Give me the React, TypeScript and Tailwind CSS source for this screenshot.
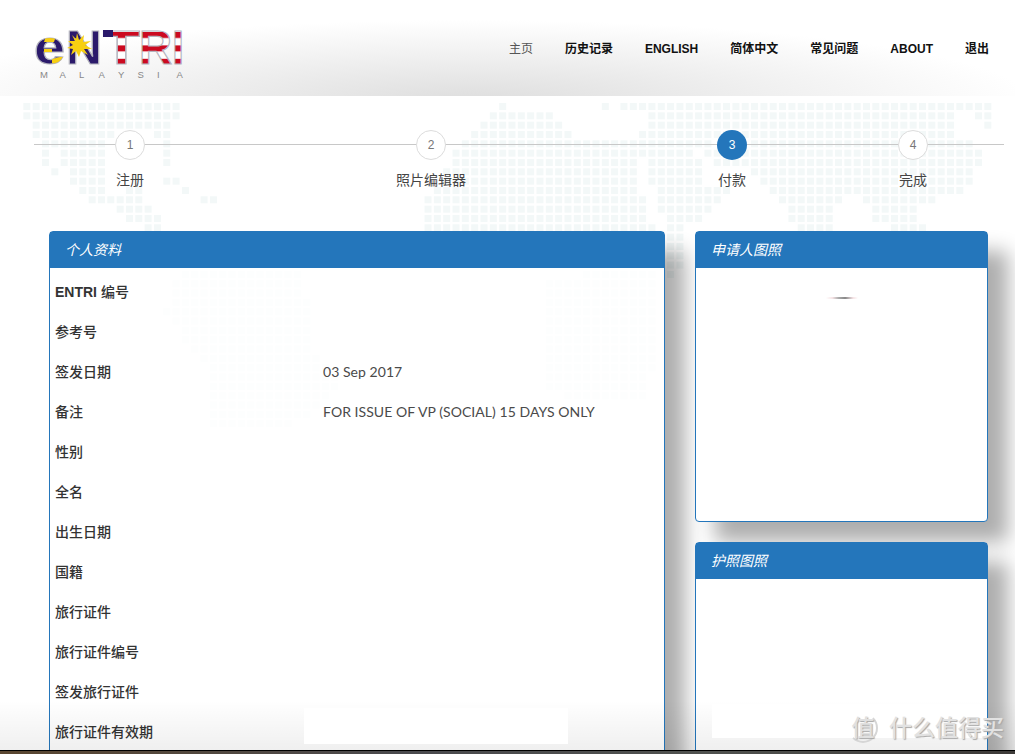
import React from "react";

const SANS = "font-['Liberation_Sans','Noto_Sans_CJK_SC',sans-serif]";

type Span = [number, number];
const mapRows: Span[][] = [
  [[0,16],[51,51],[62,62],[64,99],[100,103]],
  [[0,16],[50,56],[67,99],[102,103]],
  [[1,15],[49,57],[67,99],[103,103]],
  [[1,9],[14,15],[48,58],[66,99]],
  [[2,8],[15,15],[47,73],[78,101]],
  [[2,2],[4,8],[15,15],[46,71],[73,102]],
  [[2,2],[4,8],[15,15],[46,65],[67,72],[74,102]],
  [[3,3],[5,8],[45,65],[67,72],[78,101]],
  [[5,8],[15,16],[45,65],[67,72],[79,101]],
  [[6,8],[11,12],[17,17],[44,65],[68,75],[80,100]],
  [[7,12],[19,20],[43,66],[68,74],[81,87],[90,97]],
  [[10,13],[43,66],[68,73],[82,86],[91,95]],
  [[11,14],[43,66],[69,72],[82,86],[91,95]],
  [[13,14],[43,67],[69,70],[83,86],[93,96]],
  [[69,70]],
  [[69,70]],
  [[69,70]],
  [[69,70]],
  [[17,29],[60,67],[69,69]],
  [[16,29],[56,67]],
  [[16,29],[56,67]],
  [[16,30],[56,67]],
  [[15,30],[56,67]],
  [[16,30],[56,67]],
  [[17,30],[56,67]],
  [[17,30],[56,67]],
  [[18,30],[56,67]],
  [[19,31],[56,67]],
  [[20,32],[56,67]],
  [[20,33],[56,66]],
  [[20,33],[56,66]],
  [[20,32],[58,66]],
  [[20,31]],
  [[20,30]],
  [[20,28]],
];

function WorldMap() {
  const cells: React.ReactElement[] = [];
  mapRows.forEach((spans, r) =>
    spans.forEach(([a, b]) => {
      for (let c = a; c <= b; c++) {
        cells.push(
          <rect key={`${r}-${c}`} x={23.33 + 9.33 * c} y={103 + 9.33 * r} width={7} height={7} fill="#f3f8f8" />
        );
      }
    })
  );
  return (
    <svg className="absolute left-0 top-0" width={1015} height={754}>
      {cells}
    </svg>
  );
}

function Logo() {
  const s = { fontFamily: "'Liberation Sans', sans-serif", fontWeight: 700 } as const;
  const letters = "MALAYSIA".split("");
  return (
    <svg width={170} height={60} viewBox="30 25 170 60" className="mt-[25px] shrink-0">
      <defs>
        <pattern id="flag" patternUnits="userSpaceOnUse" x="0" y="32" width="200" height="13.4">
          <rect width="200" height="13.4" fill="#ffffff" />
          <rect width="200" height="6" fill="#cc0a20" />
        </pattern>
        <clipPath id="eclip">
          <text x="34" y="64" fontSize="49" textLength="31" lengthAdjust="spacingAndGlyphs" style={s}>e</text>
        </clipPath>
      </defs>
      <text x="34" y="64" fontSize="49" textLength="31" lengthAdjust="spacingAndGlyphs" fill="#2b1a6b" stroke="#b4b4be" strokeWidth="1.2" style={s}>e</text>
      <g clipPath="url(#eclip)">
        <polygon points="46,36 56,36 54,42 44,42" fill="#f7cf12" />
        <polygon points="44,49 52,49 52,53 44,53" fill="#f7cf12" />
        <polygon points="52,59 64,56 62,66 52,63" fill="#f7cf12" />
      </g>
      <text x="66" y="64" fontSize="48" textLength="36" lengthAdjust="spacingAndGlyphs" fill="#2b1a6b" stroke="#b4b4be" strokeWidth="1.2" style={s}>N</text>
      <polygon
        points="77,33 79,40 84,35 83,42 91,41 85,45 92,49 84,49 88,55 81,51 79,57 76,51 71,55 73,49 67,48 73,45 68,41 75,41 72,35 76,39"
        fill="#f7cf12"
      />
      <text x="103" y="64" fontSize="48" textLength="37" lengthAdjust="spacingAndGlyphs" fill="url(#flag)" stroke="#b4b4be" strokeWidth="1.2" style={s}>T</text>
      <rect x="103" y="30" width="10" height="7" fill="#2b1a6b" />
      <text x="139" y="64" fontSize="48" textLength="33" lengthAdjust="spacingAndGlyphs" fill="url(#flag)" stroke="#b4b4be" strokeWidth="1.2" style={s}>R</text>
      <text x="172" y="64" fontSize="48" textLength="12" lengthAdjust="spacingAndGlyphs" fill="url(#flag)" stroke="#b4b4be" strokeWidth="1.2" style={s}>I</text>
      {letters.map((ch, i) => (
        <text key={i} x={40 + i * 19.5} y={78} fontSize="9.5" fill="#888" style={{ fontFamily: "'Liberation Sans', sans-serif" }}>
          {ch}
        </text>
      ))}
    </svg>
  );
}

const nav = ["主页", "历史记录", "ENGLISH", "简体中文", "常见问题", "ABOUT", "退出"];

function Header() {
  return (
    <header className="relative flex h-24 items-start justify-between pl-[30px] pr-[26px] bg-[radial-gradient(ellipse_560px_80px_at_470px_100px,#dedede,#ffffff)]">
      <Logo />
      <nav className="mt-[39px] flex items-center gap-8">
        {nav.map((n, i) => (
          <a key={n} className={`text-xs leading-5 whitespace-nowrap ${i === 0 ? "font-normal text-[#555]" : "font-bold text-[#111]"}`}>
            {n}
          </a>
        ))}
      </nav>
    </header>
  );
}

const steps = [
  { n: "1", t: "注册" },
  { n: "2", t: "照片编辑器" },
  { n: "3", t: "付款", active: true },
  { n: "4", t: "完成" },
];

function Stepper() {
  return (
    <div className="relative h-[135px] pt-[34px] pl-[100px]">
      <div className="absolute left-[34px] top-[48px] h-px w-[970px] bg-[#c8c8c8]" />
      <div className="relative flex">
        <div className="flex w-[60px] flex-col items-center">
          <StepBody {...steps[0]} />
        </div>
        <div className="ml-[241px] flex w-[60px] flex-col items-center">
          <StepBody {...steps[1]} />
        </div>
        <div className="ml-[241px] flex w-[60px] flex-col items-center">
          <StepBody {...steps[2]} />
        </div>
        <div className="ml-[121px] flex w-[60px] flex-col items-center">
          <StepBody {...steps[3]} />
        </div>
      </div>
    </div>
  );
}

function StepBody({ n, t, active }: { n: string; t: string; active?: boolean }) {
  return (
    <>
      <div
        className={`flex h-[30px] w-[30px] items-center justify-center rounded-full text-xs ${
          active ? "bg-[#2476bb] text-white" : "border border-[#dcdcdc] bg-white text-[#777]"
        }`}
      >
        {n}
      </div>
      <div className="mt-[10px] whitespace-nowrap text-sm leading-5 text-[#444]">{t}</div>
    </>
  );
}

const rows: [string, string?][] = [
  ["ENTRI 编号"],
  ["参考号"],
  ["签发日期", "03 Sep 2017"],
  ["备注", "FOR ISSUE OF VP (SOCIAL) 15 DAYS ONLY"],
  ["性别"],
  ["全名"],
  ["出生日期"],
  ["国籍"],
  ["旅行证件"],
  ["旅行证件编号"],
  ["签发旅行证件"],
  ["旅行证件有效期"],
];

function PanelHead({ title }: { title: string }) {
  return (
    <div className="flex h-[36px] items-center bg-[#2476bb] pl-[15px] text-sm italic text-white">{title}</div>
  );
}

export default function App() {
  return (
    <div className={`relative h-[754px] w-[1015px] overflow-hidden bg-white ${SANS}`}>
      <WorldMap />
      <div className="relative">
        <Header />
        <Stepper />
        <main className="flex items-start gap-[30px] pl-[49px]">
          <section className="w-[616px] rounded-t border border-[#2476bb] bg-white/80 shadow-[20px_20px_20px_rgba(0,0,0,0.32)]">
            <PanelHead title="个人资料" />
            <div className="pt-1 pb-10">
              {rows.map(([k, v]) => (
                <div key={k} className="flex h-10 items-center pl-[5px]">
                  <div className="w-[268px] text-sm font-medium text-[#333]">
                    {k.startsWith("ENTRI") ? (
                      <>
                        <b className="font-bold">ENTRI</b> 编号
                      </>
                    ) : (
                      k
                    )}
                  </div>
                  {v && <div className="font-['Lato',sans-serif] text-sm tracking-[0.05px] text-[#4a4a4a]">{v}</div>}
                </div>
              ))}
            </div>
          </section>
          <div className="flex w-[293px] flex-col gap-5">
            <section className="h-[291px] rounded border border-[#2476bb] bg-white shadow-[20px_20px_20px_rgba(0,0,0,0.32)]">
              <PanelHead title="申请人图照" />
              <div className="mx-auto mt-[29px] h-[2px] w-[32px] bg-[linear-gradient(90deg,#ffffff,#f6e4e6_20%,#aaa_40%,#888_60%,#f6e4e6_85%,#ffffff)]" />
            </section>
            <section className="h-[300px] rounded border border-[#2476bb] bg-white shadow-[20px_20px_20px_rgba(0,0,0,0.32)]">
              <PanelHead title="护照图照" />
            </section>
          </div>
        </main>
      </div>

      {/* window reflection at the foot of the screenshot */}
      <div className="absolute bottom-0 left-0 h-[54px] w-full bg-[linear-gradient(180deg,rgba(0,0,0,0),rgba(0,0,0,0.065))]" />
      {/* redaction patches */}
      <div className="absolute left-[304px] top-[708px] h-9 w-[264px] bg-white" />
      <div className="absolute left-[712px] top-[704px] h-[34px] w-[275px] bg-white" />
      {/* watermark */}
      <div className="absolute left-[848px] top-[713px] flex h-[30px] w-[30px] items-center justify-center rounded-full border-2 border-t-transparent border-l-transparent border-[#d6d6d6] text-[23px] leading-none font-medium text-[#e0e0e0] [text-shadow:1px_1px_1px_#a8a8a8]">
        值
      </div>
      <div className="absolute left-[889px] top-[713px] text-[23px] leading-[30px] font-medium whitespace-nowrap text-[#e2e2e2] [text-shadow:1px_1px_1px_#a8a8a8]">
        什么值得买
      </div>
      {/* desktop strip */}
      <div className="absolute bottom-0 left-0 h-1 w-full border-t border-black bg-[linear-gradient(90deg,#5a4630,#4a4a4e_40%,#50524f_70%,#3d3a38)]" />
    </div>
  );
}
